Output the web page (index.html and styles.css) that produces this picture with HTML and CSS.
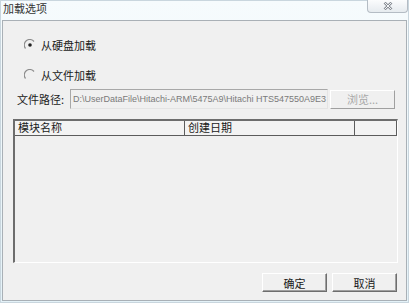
FILE: index.html
```html
<!DOCTYPE html>
<html lang="zh-CN">
<head>
    <meta charset="UTF-8">
    <title>加载选项</title>
    <link rel="stylesheet" href="styles.css">
</head>
<body>
    <div class="window">
        <div class="titlebar">
            <span class="title">加载选项</span>
            <div class="close">
                <svg width="10" height="8" viewBox="0 0 10 8">
                    <path d="M1.5 0.5 L8.5 7.5 M8.5 0.5 L1.5 7.5" stroke="#8a8f96" stroke-width="2.6" fill="none"/>
                    <path d="M1.5 0.5 L8.5 7.5 M8.5 0.5 L1.5 7.5" stroke="#f4f6f8" stroke-width="1" fill="none"/>
                </svg>
            </div>
        </div>

        <div class="client">
            <label class="radio-row first">
                <svg class="radio" width="12" height="12" viewBox="0 0 12 12">
                    <path d="M10 2.5 A5 5 0 0 0 1.5 9.5" stroke="#8c8c8c" stroke-width="1.2" fill="none"/>
                    <circle cx="6" cy="6" r="1.8" fill="#222"/>
                </svg>
                <span>从硬盘加载</span>
            </label>
            <label class="radio-row second">
                <svg class="radio" width="12" height="12" viewBox="0 0 12 12">
                    <path d="M10 2.5 A5 5 0 0 0 1.5 9.5" stroke="#8c8c8c" stroke-width="1.2" fill="none"/>
                </svg>
                <span>从文件加载</span>
            </label>

            <div class="path-row">
                <span class="path-label">文件路径:</span>
                <div class="path-input">D:\UserDataFile\Hitachi-ARM\5475A9\Hitachi HTS547550A9E3</div>
                <div class="btn disabled">浏览...</div>
            </div>

            <div class="list">
                <div class="list-head">
                    <div class="col name">模块名称</div>
                    <div class="col date">创建日期</div>
                    <div class="col rest"></div>
                </div>
                <div class="list-body"></div>
            </div>

            <div class="actions">
                <div class="btn">确定</div>
                <div class="btn">取消</div>
            </div>
        </div>
    </div>
</body>
</html>
```

FILE: styles.css
```css
body {
    margin: 0;
    padding: 0;
    width: 409px;
    height: 303px;
    overflow: hidden;
    font-family: "Noto Sans CJK SC", "Liberation Sans", sans-serif;
    font-size: 11px;
    color: #1a1a1a;
}
.window {
    width: 409px;
    height: 303px;
    box-sizing: border-box;
    background: linear-gradient(#f6fbfd, #e4f2f8);
    border: 1px solid #c9d6de;
    display: flex;
    flex-direction: column;
}
.titlebar {
    height: 19px;
    display: flex;
    align-items: flex-start;
}
.title {
    margin: 1px 0 0 2px;
    font-size: 11px;
    line-height: 13px;
    color: #333;
}
.close {
    margin-left: auto;
    margin-right: 0;
    width: 39px;
    height: 12px;
    margin-top: -1px;
    border: 1px solid #b4bcc4;
    border-top: none;
    border-radius: 0 0 4px 4px;
    background: linear-gradient(#fbfcfd, #e6ebef);
    display: flex;
    justify-content: center;
    align-items: center;
}
.client {
    flex: 1;
    margin: 0 1px 1px 1px;
    border: 1px solid #a9b0b6;
    background: #f0f0f0;
    display: flex;
    flex-direction: column;
    padding: 0 9px 0 10px;
}
.radio-row {
    display: flex;
    align-items: center;
    gap: 5px;
    height: 14px;
}
.radio-row.first {
    margin: 17px 0 0 11px;
}
.radio-row.second {
    margin: 16px 0 0 11px;
}
.radio {
    display: block;
}
.path-row {
    display: flex;
    align-items: center;
    margin-top: 7px;
    height: 20px;
}
.path-label {
    width: 57px;
    padding-left: 4px;
    box-sizing: border-box;
}
.path-input {
    width: 258px;
    height: 20px;
    box-sizing: border-box;
    border: 1px solid #a8a8a8;
    border-right-color: #e4e4e4;
    border-bottom-color: #e4e4e4;
    background: #f0f0f0;
    font-family: "Liberation Sans", sans-serif;
    font-size: 9px;
    color: #7a7a7a;
    line-height: 18px;
    padding-left: 2px;
    white-space: nowrap;
    overflow: hidden;
}
.btn {
    width: 65px;
    height: 19px;
    box-sizing: border-box;
    border: 1px solid #fff;
    border-right-color: #6e6e6e;
    border-bottom-color: #6e6e6e;
    box-shadow: inset -1px -1px 0 #a0a0a0;
    background: #f0f0f0;
    display: flex;
    justify-content: center;
    align-items: center;
}
.path-row .btn {
    margin-left: 2px;
    color: #a8a8a8;
    border-right-color: #a0a0a0;
    border-bottom-color: #a0a0a0;
    box-shadow: none;
}
.list {
    margin-top: 10px;
    width: 385px;
    height: 144px;
    box-sizing: border-box;
    border: 2px solid #6d6d6d;
    border-right: 1px solid #fff;
    border-bottom: 1px solid #fff;
    background: #f0f0f0;
    display: flex;
    flex-direction: column;
}
.list-head {
    display: flex;
    height: 14px;
    border-bottom: 1px solid #5c5c5c;
    background: #f3f3f3;
}
.col {
    height: 14px;
    line-height: 13px;
    padding-left: 3px;
    box-sizing: border-box;
    border-right: 1px solid #5c5c5c;
}
.col.name {
    width: 170px;
}
.col.date {
    width: 170px;
}
.col.rest {
    width: 42px;
}
.list-body {
    flex: 1;
}
.actions {
    display: flex;
    justify-content: flex-end;
    gap: 5px;
    margin-top: 10px;
}
```
